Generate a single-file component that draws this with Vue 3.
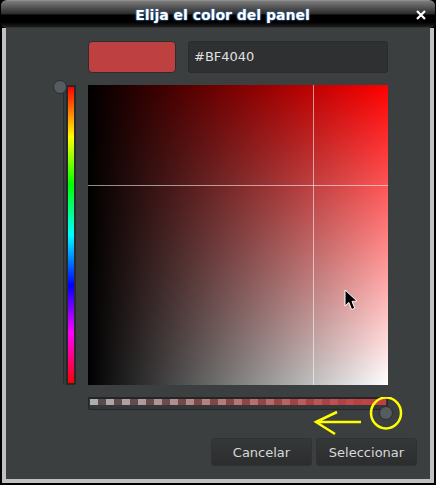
<template>
    <div class="window">
        <!-- barra de titulo -->
        <div class="titlebar">
            <span class="title">Elija el color del panel</span>
            <svg class="close" width="10" height="10" viewBox="0 0 10 10">
                <path d="M1 1 L9 9 M9 1 L1 9" stroke="#fff" stroke-width="2.2" fill="none" />
            </svg>
        </div>

        <div class="frame">
            <div class="content">
                <div class="picker">
                    <div></div>
                    <div class="top-row">
                        <div class="swatch"></div>
                        <div class="hex">{{ hex }}</div>
                    </div>

                    <div class="hue-col">
                        <div class="hue-track">
                            <div class="hue"></div>
                            <div class="knob hue-knob"></div>
                        </div>
                    </div>
                    <div class="square">
                        <div class="line-v"></div>
                        <div class="line-h"></div>
                        <svg class="cursor" width="15" height="22" viewBox="0 0 15 22">
                            <path d="M1 1 L1 17 L4.8 13.4 L7.6 20.5 L10.8 19.2 L8 12.4 L13 12 Z" fill="#000" stroke="#fff" stroke-width="1" />
                        </svg>
                    </div>

                    <div></div>
                    <div class="alpha-track">
                        <div class="alpha"></div>
                        <div class="knob alpha-knob"></div>
                        <!-- anotacion amarilla -->
                        <svg class="note" width="100" height="44" viewBox="0 0 100 44">
                            <ellipse cx="82" cy="16" rx="15" ry="15.5" fill="none" stroke="#ffff00" stroke-width="2.5" />
                            <path d="M57 25 L12 25 M33 15 L12 25 L31 37" fill="none" stroke="#ffff00" stroke-width="2.5" />
                        </svg>
                    </div>
                </div>

                <div class="buttons">
                    <button class="btn">Cancelar</button>
                    <button class="btn">Seleccionar</button>
                </div>
            </div>
        </div>
    </div>
</template>

<script setup>
const hex = '#BF4040';
</script>

<style>
body {
    background: #000;
}
</style>

<style scoped>
.window {
    width: 436px;
    height: 485px;
    display: flex;
    flex-direction: column;
    background: #000;
    font-family: "DejaVu Sans", sans-serif;
    overflow: hidden;
}

.titlebar {
    height: 28px;
    flex-shrink: 0;
    position: relative;
    display: flex;
    align-items: center;
    justify-content: center;
    box-sizing: border-box;
    margin: 0 1px;
    padding: 1px 0 0 9px;
    border-radius: 6px;
    border-top: 1px solid #8e8e8e;
    border-bottom: 1px solid #333;
    background: linear-gradient(to bottom, #7c7c7c 0, #2a2a2a 13px, #000 14px, #000 21px, #1c1c1c 26px);
}

.title {
    color: #fff;
    font-size: 14px;
    font-weight: bold;
    text-shadow: 0 0 2px #3c78b4, 0 0 2px #3c78b4;
}

.close {
    position: absolute;
    right: 9px;
    top: 9px;
}

.frame {
    flex: 1;
    margin: 0 2px 2px;
    border: 4px solid #c0c0c0;
    border-top: none;
    display: flex;
}

.content {
    flex: 1;
    background: #3b3f40;
    padding-top: 13px;
}

.picker {
    display: grid;
    grid-template-columns: 82px 300px;
    grid-template-rows: 32px 300px 13px;
    row-gap: 12px;
}

.top-row {
    display: flex;
    gap: 12px;
}

.swatch {
    width: 88px;
    box-sizing: border-box;
    background: #bf4040;
    border: 1px solid #2b2d2e;
    border-radius: 4px;
}

.hex {
    flex: 1;
    box-sizing: border-box;
    background: #2e3032;
    border: 1px solid #292b2c;
    border-radius: 3px;
    color: #e0e0e0;
    font-size: 13px;
    line-height: 30px;
    padding-left: 5px;
}

.hue-col {
    display: flex;
    justify-content: flex-end;
    padding-right: 12px;
}

.hue-track {
    position: relative;
    width: 13px;
    box-sizing: border-box;
    background: linear-gradient(to right, #2a2c2d 0, #2a2c2d 1px, #383b3d 1px, #383b3d 3px, #26282a 3px);
    border-radius: 0 0 2px 3px;
    padding: 2px 2px 2px 5px;
}

.hue {
    height: 100%;
    background: linear-gradient(to bottom, #f00 0%, #ff0 17%, #0f0 33%, #0ff 50%, #00f 67%, #f0f 83%, #f00 100%);
}

.knob {
    position: absolute;
    width: 14px;
    height: 14px;
    box-sizing: border-box;
    border-radius: 50%;
    border: 1px solid #2a2c2e;
    background: #555c5f;
}

.hue-knob {
    left: -10px;
    top: -5px;
}

.square {
    position: relative;
    background: linear-gradient(to right, #000, rgba(0, 0, 0, 0)), linear-gradient(to bottom, #f00, #fff);
}

.line-v {
    position: absolute;
    left: 225px;
    top: 0;
    bottom: 0;
    width: 1px;
    background: rgba(255, 255, 255, 0.55);
}

.line-h {
    position: absolute;
    top: 100px;
    left: 0;
    right: 0;
    height: 1px;
    background: rgba(255, 255, 255, 0.55);
}

.cursor {
    position: absolute;
    left: 256px;
    top: 204px;
}

.alpha-track {
    position: relative;
    box-sizing: border-box;
    background: #34373a;
    border: 1px solid #232526;
    border-top-width: 2px;
    border-radius: 0 0 2px 2px;
    height: 13px;
    padding: 0 1px;
}

.alpha {
    height: 6px;
    background: linear-gradient(to right, rgba(191, 64, 64, 0), #bf4040 97%),
        repeating-linear-gradient(to right, #aeaeae 0, #aeaeae 8px, #4f4f4f 8px, #4f4f4f 16px);
}

.alpha-knob {
    right: -6px;
    top: 7px;
}

.note {
    position: absolute;
    left: 215px;
    top: -2px;
}

.buttons {
    display: flex;
    justify-content: flex-end;
    gap: 4px;
    margin-top: 28px;
    padding-right: 13px;
}

.btn {
    height: 28px;
    width: 101px;
    box-sizing: border-box;
    border: 1px solid #2f3132;
    border-radius: 3px;
    background: linear-gradient(to bottom, #353839, #2b2d2e);
    color: #d8d8d8;
    font-family: "DejaVu Sans", sans-serif;
    font-size: 13px;
    padding: 0;
}
</style>
